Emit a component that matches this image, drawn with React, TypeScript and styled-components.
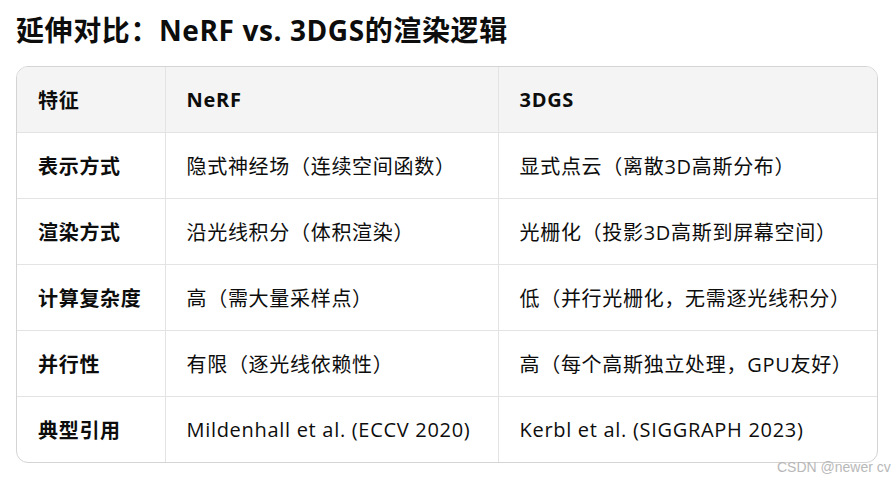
import { createGlobalStyle } from 'styled-components'
import styled from 'styled-components'

const GlobalStyle = createGlobalStyle`
  html, body {
    margin: 0;
    padding: 0;
    background: #fff;
  }
  body {
    font-family: "Open Sans", "Noto Sans CJK SC", sans-serif;
    color: #0d0d0d;
  }
`

const rows = [
  ['表示方式', '隐式神经场（连续空间函数）', '显式点云（离散3D高斯分布）'],
  ['渲染方式', '沿光线积分（体积渲染）', '光栅化（投影3D高斯到屏幕空间）'],
  ['计算复杂度', '高（需大量采样点）', '低（并行光栅化，无需逐光线积分）'],
  ['并行性', '有限（逐光线依赖性）', '高（每个高斯独立处理，GPU友好）'],
  ['典型引用', 'Mildenhall et al. (ECCV 2020)', 'Kerbl et al. (SIGGRAPH 2023)'],
]

export default function App() {
  return (
    <S.Page>
      <GlobalStyle />
      <S.Title>延伸对比：NeRF vs. 3DGS的渲染逻辑</S.Title>
      <S.TableWrap>
        <S.Table>
          <colgroup>
            <col style={{ width: 148 }} />
            <col style={{ width: 333 }} />
            <col />
          </colgroup>
          <thead>
            <tr>
              <S.Head>特征</S.Head>
              <S.Head>NeRF</S.Head>
              <S.Head>3DGS</S.Head>
            </tr>
          </thead>
          <tbody>
            {rows.map((r, i) => (
              <tr key={i}>
                <S.Cell $strong>{r[0]}</S.Cell>
                <S.Cell>{r[1]}</S.Cell>
                <S.Cell>{r[2]}</S.Cell>
              </tr>
            ))}
          </tbody>
        </S.Table>
      </S.TableWrap>
      <S.Watermark>CSDN @newer cv</S.Watermark>
    </S.Page>
  )
}

const S = {
  Page: styled.div`
    position: relative;
    width: 894px;
    height: 482px;
    overflow: hidden;
    padding: 11px 16px 0;
    box-sizing: border-box;
  `,
  Title: styled.h1`
    margin: 0 0 17px;
    font-size: 28px;
    line-height: 38px;
    font-weight: 700;
    letter-spacing: 0.6px;
    color: #0d0d0d;
  `,
  TableWrap: styled.div`
    width: 862px;
    border: 1px solid #d4d4d4;
    border-radius: 12px;
    overflow: hidden;
    box-sizing: border-box;
  `,
  Table: styled.table`
    width: 100%;
    border-collapse: collapse;
    table-layout: fixed;
    font-size: 20px;
    letter-spacing: 0.7px;
    tr:last-child td { border-bottom: none; }
    th:last-child, td:last-child { border-right: none; }
  `,
  Head: styled.th`
    height: 65px;
    background: #f4f4f4;
    text-align: left;
    padding: 0 21px;
    font-weight: 700;
    border-bottom: 1px solid #e3e3e3;
    border-right: 1px solid #e3e3e3;
  `,
  Cell: styled.td<{ $strong?: boolean }>`
    height: 65px;
    padding: 0 21px;
    font-weight: ${(p) => (p.$strong ? 700 : 400)};
    border-bottom: 1px solid #e3e3e3;
    border-right: 1px solid #e3e3e3;
    white-space: nowrap;
  `,
  Watermark: styled.div`
    position: absolute;
    left: 777px;
    top: 459px;
    font-family: "Liberation Sans", Arial, sans-serif;
    font-size: 14px;
    color: #b8b8b8;
    white-space: nowrap;
  `,
}
